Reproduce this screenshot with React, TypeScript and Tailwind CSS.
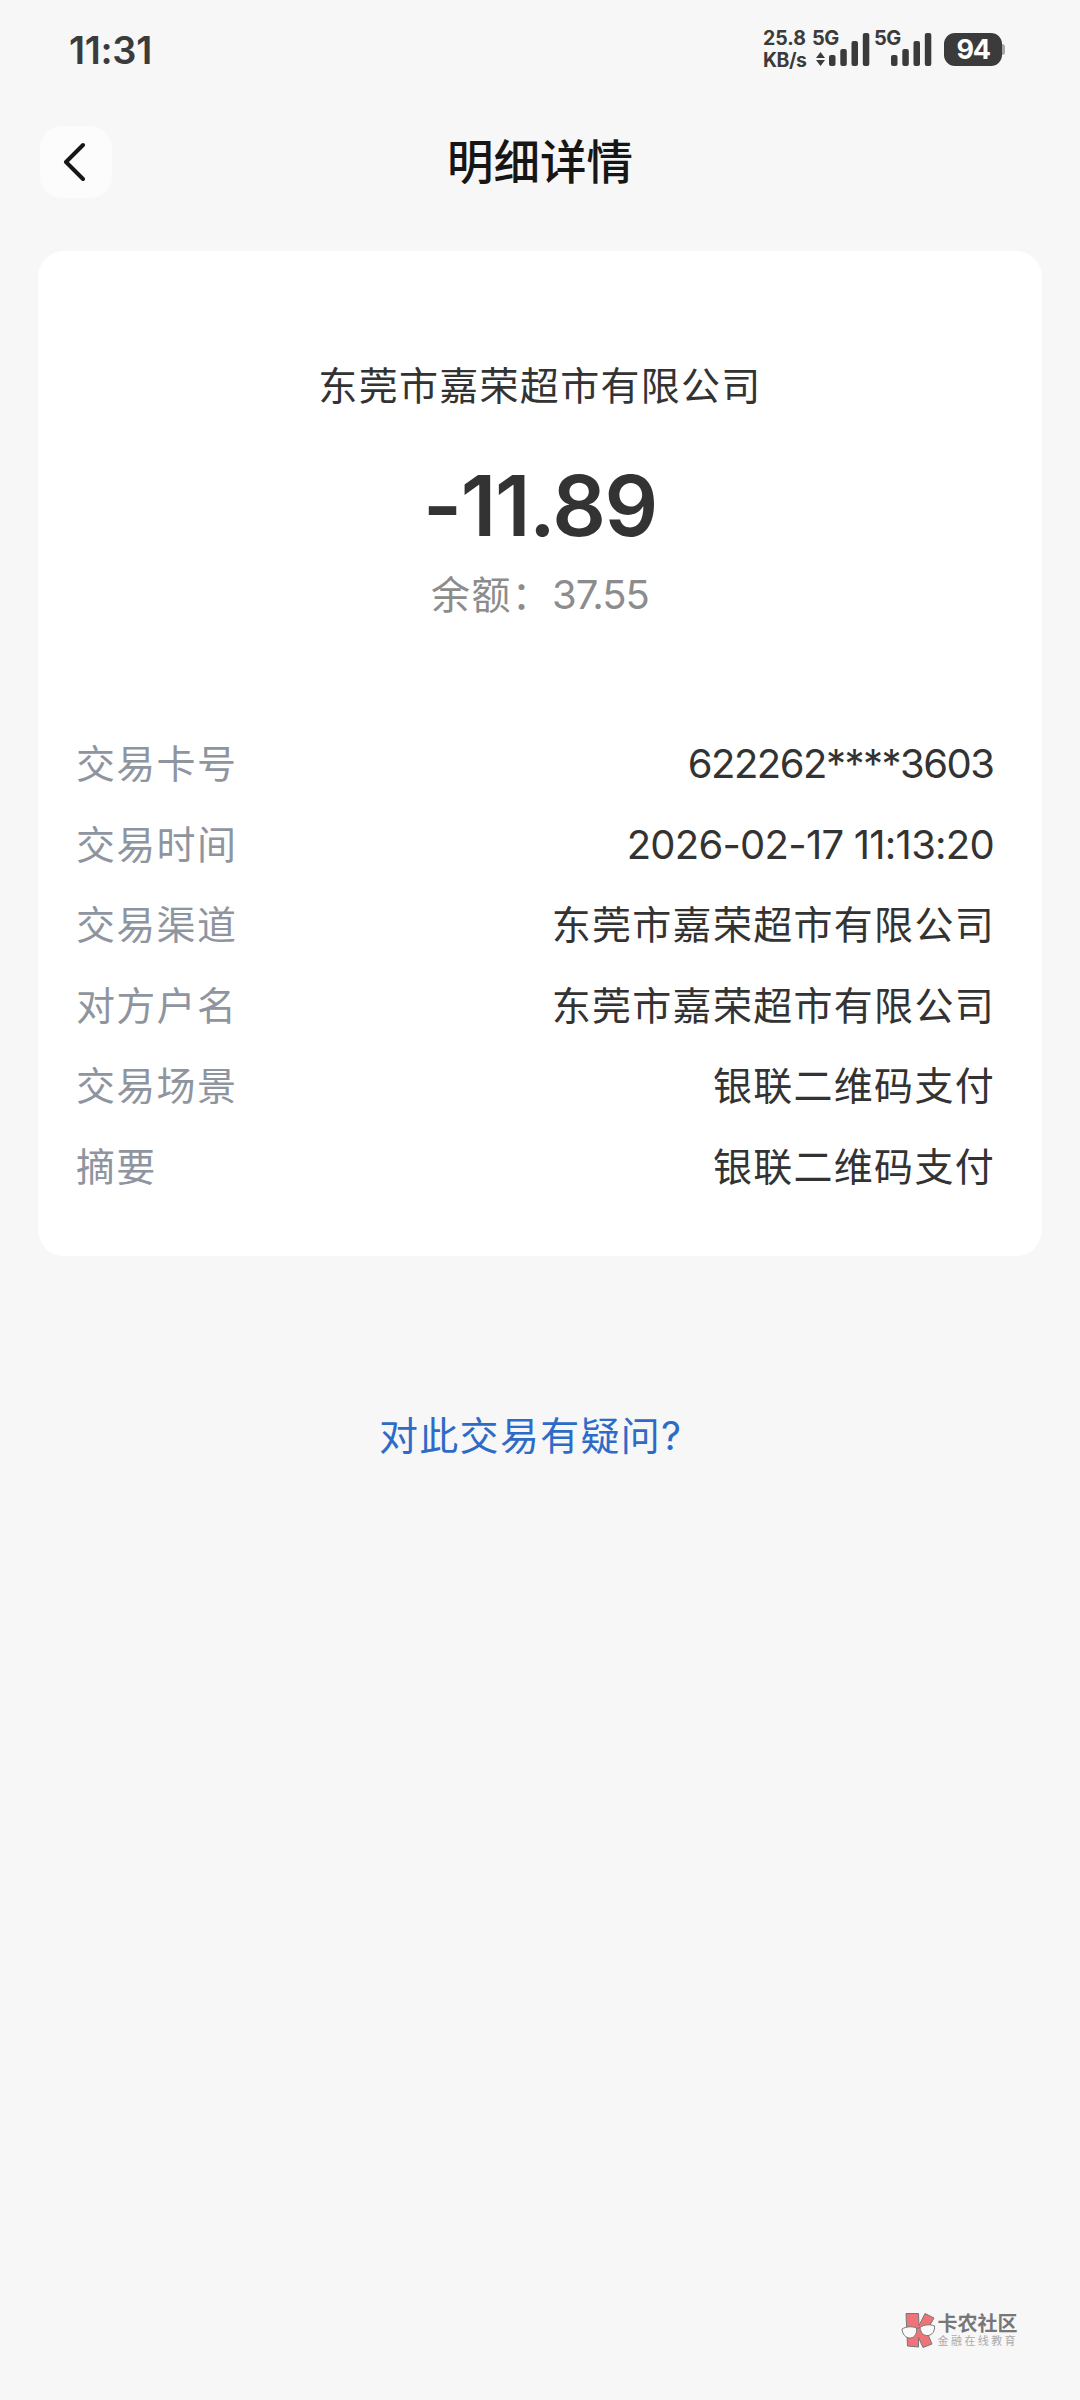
const details = [
  { label: "交易卡号", value: "622262****3603", style: "mr-[10.5px] text-[40px] tracking-[-1.5px]" },
  { label: "交易时间", value: "2026-02-17 11:13:20", style: "mr-[10px] text-[40px] tracking-[-0.75px]" },
  { label: "交易渠道", value: "东莞市嘉荣超市有限公司", style: "mr-[9px] tracking-[1.3px]" },
  { label: "对方户名", value: "东莞市嘉荣超市有限公司", style: "mr-[9px] tracking-[1.3px]" },
  { label: "交易场景", value: "银联二维码支付", style: "mr-[9px] tracking-[1.3px]" },
  { label: "摘要", value: "银联二维码支付", style: "mr-[9px] tracking-[1.3px]" },
];

function SignalBars() {
  return (
    <svg width="41" height="33" viewBox="0 0 41 33" fill="#3b3b3b">
      <rect x="0" y="22" width="6.5" height="11" rx="2" />
      <rect x="11.3" y="16" width="6.5" height="17" rx="2" />
      <rect x="22.5" y="8" width="6.5" height="25" rx="2" />
      <rect x="33.8" y="0" width="6.5" height="33" rx="2" />
    </svg>
  );
}

function StatusBar() {
  return (
    <div className="flex h-[100px] items-center justify-between pl-[69px] pr-[75px] text-[#3b3b3b]">
      <span className="text-[38px] font-semibold leading-none tracking-[-0.3px]">11:31</span>

      <div className="flex h-[38px] items-end pb-[3px]">
        <div className="mb-[-5px] flex w-[45px] flex-col text-[19.5px] font-bold leading-[22px]">
          <span>25.8</span>
          <span className="tracking-[-0.5px]">KB/s</span>
        </div>
        <div className="relative ml-[4px] flex h-[33px] w-[58px] items-end justify-end">
          <span className="absolute left-0 top-[-6px] text-[20px] font-bold leading-[22px] tracking-[-0.5px]">5G</span>
          <svg className="mr-[4px]" width="9" height="14" viewBox="0 0 9 14" fill="#3b3b3b">
            <path d="M4.5 0L9 6H0zM4.5 14L0 8h9z" />
          </svg>
          <SignalBars />
        </div>
        <div className="relative ml-[4px] flex h-[33px] w-[58px] items-end justify-end">
          <span className="absolute left-0 top-[-6px] text-[20px] font-bold leading-[22px] tracking-[-0.5px]">5G</span>
          <SignalBars />
        </div>
        <div className="ml-[12px] flex items-center">
          <div className="flex h-[33px] w-[58px] items-center justify-center rounded-[11px] bg-[#3b3b3b] text-[27px] font-bold leading-none tracking-[-1.5px] text-white">
            94
          </div>
          <div className="h-[11px] w-[3px] rounded-r-[3px] bg-[#a5a5a5]" />
        </div>
      </div>
    </div>
  );
}

function Header() {
  return (
    <div className="grid h-[124px] grid-cols-[72px_1fr_72px] items-center px-10">
      <button className="flex h-[72px] w-[72px] items-center justify-center rounded-[22px] bg-[#fcfcfc]">
        <svg width="22" height="40" viewBox="0 0 22 40" fill="none" className="mr-[4px]">
          <path
            d="M20 3L3 20l17 17"
            stroke="#161616"
            strokeWidth="4"
            strokeLinecap="round"
            strokeLinejoin="round"
          />
        </svg>
      </button>
      <h1 className="text-center text-[46.5px] font-medium leading-none text-[#161616]">明细详情</h1>
    </div>
  );
}

function Watermark() {
  return (
    <div className="flex items-center">
      <svg width="35" height="37" viewBox="0 0 35 37" stroke="#777" strokeWidth="1">
        {/* red K */}
        <path fill="#ee7479" d="M5 1.5h12.5l.5 12 6-12 9 4.5-7.5 13L31 32l-9 3.5-4.5-10V35L6.5 34z" />
        {/* glasses */}
        <path fill="#fafafa" d="M1 17c4-2.5 10-3 14.500-1 .8 5-1.500 9.500-6 10C4.5 26.5 1.5 22 1 17z" />
        <path fill="#fafafa" d="M19 15.5c4-3 10-3.5 14.500-1.500.5 5-2 9-6.500 9.500-4.500.5-7.500-3-8-8z" />
        <path fill="none" d="M15.5 16.5l3.500-1" />
      </svg>
      <div className="ml-[2px] flex flex-col">
        <span className="text-[20px] font-bold leading-[20px] text-[#777]">卡农社区</span>
        <span className="mt-[1px] text-[11px] leading-[12px] tracking-[2.4px] text-[#aaa]">金融在线教育</span>
      </div>
    </div>
  );
}

export default function App() {
  return (
    <div className="flex h-[2400px] w-[1080px] flex-col bg-[#f7f7f7] font-[Inter,'Noto_Sans_CJK_SC',sans-serif]">
      <StatusBar />
      <Header />

      <main className="flex grow flex-col px-[38px] pt-[27px]">
        <section className="h-[1005px] rounded-[26px] bg-white px-[38px] pt-[105px]">
          <div className="flex flex-col items-center">
            <p className="text-[39px] leading-[60px] tracking-[1.3px] text-[#333]">东莞市嘉荣超市有限公司</p>
            <p className="mt-[40px] text-[84px] font-semibold leading-[100px] tracking-[-1.4px] text-[#333]">-11.89</p>
            <p className="mt-[9px] flex text-[39px] leading-[60px] text-[#8c8c8c]">
              <span className="tracking-[1.3px]">余额：</span>
              <span className="text-[40px] tracking-[-1px]">37.55</span>
            </p>
          </div>

          <dl className="mt-[99px] text-[39px] leading-[60px]">
            {details.map((row) => (
              <div key={row.label} className="flex h-[80.5px] items-center justify-between">
                <dt className="tracking-[1.3px] text-[#8f959f]">{row.label}</dt>
                <dd className={`text-[#333] ${row.style}`}>{row.value}</dd>
              </div>
            ))}
          </dl>
        </section>

        <a className="ml-[341px] mt-[150px] text-[39px] leading-[60px] tracking-[1.3px] text-[#2e6bc8]">
          对此交易有疑问?
        </a>
      </main>

      <footer className="flex justify-end pb-[51px] pr-[62px]">
        <Watermark />
      </footer>
    </div>
  );
}
